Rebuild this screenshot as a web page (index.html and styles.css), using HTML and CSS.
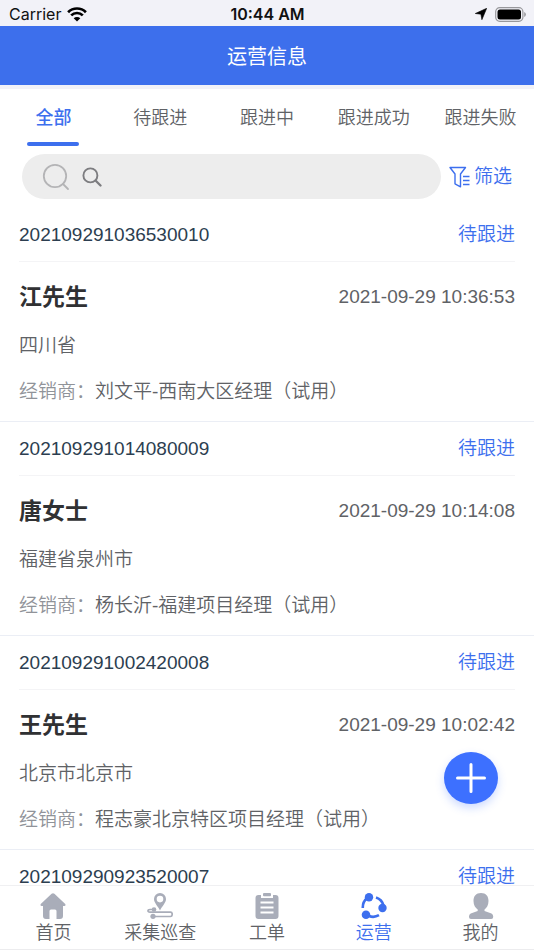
FILE: index.html
```html
<!DOCTYPE html>
<html lang="zh-CN">
<head>
<meta charset="utf-8">
<meta name="viewport" content="width=device-width, initial-scale=1">
<title>运营信息</title>
<link rel="stylesheet" href="styles.css">
</head>
<body>
<div class="status">
  <div class="carrier">Carrier
    <svg width="20" height="15" viewBox="0 0 20 15" fill="none" stroke="#000" stroke-width="2.7"><path d="M1.1 5.2a12.6 12.6 0 0 1 17.8 0M4.2 8.4a8.2 8.2 0 0 1 11.6 0"/><path d="M10 14.6 6.7 11.3a4.6 4.6 0 0 1 6.6 0z" fill="#000" stroke="none"/></svg>
  </div>
  <div class="clock">10:44 AM</div>
  <div class="power">
    <svg width="12" height="12" viewBox="0 0 12 12"><path d="M11.700.3 6.900 11.700 5.900 6.200.3 5.500z" stroke="#000" stroke-width=".6" stroke-linejoin="round"/></svg>
    <svg width="31" height="15" viewBox="0 0 31 15"><rect x=".7" y=".7" width="27.200" height="13.600" rx="4" fill="none" stroke="#98989c" stroke-width="1.200"/><rect x="2.500" y="2.500" width="23.500" height="10" rx="2.500"/><path d="M29.200 5v5q1.700-.7 1.700-2.500T29.200 5z" fill="#98989c"/></svg>
  </div>
</div>
<header class="title"><h1>运营信息</h1></header>
<nav class="tabs">
  <button class="tab active">全部</button>
  <button class="tab">待跟进</button>
  <button class="tab">跟进中</button>
  <button class="tab">跟进成功</button>
  <button class="tab">跟进失败</button>
</nav>
<div class="tools">
  <label class="search">
    <svg width="28" height="28" viewBox="0 0 28 28" fill="none" stroke="#b4b4b6" stroke-width="1.800" stroke-linecap="round"><circle cx="13" cy="13" r="11.200"/><path d="m21 21 5 5"/></svg>
    <svg width="20" height="20" viewBox="0 0 20 20" fill="none" stroke="#7d7d80" stroke-width="1.900" stroke-linecap="round"><circle cx="8.400" cy="8.400" r="7"/><path d="m13.500 13.500 5 5" stroke-width="2.300"/></svg>
    <input type="search" aria-label="搜索">
  </label>
  <button class="filter">
    <svg width="21" height="22" viewBox="0 0 21 22" fill="none" stroke="#3d6fee" stroke-width="1.400" stroke-linejoin="round"><path d="M1 1.500h15.500L11.500 8v12.800L6 17.800V8zM14 10.500h6.500M14 14.500h6.500M14 18.500h6.500"/></svg>
    筛选
  </button>
</div>
<main class="list">
  <article class="card">
    <div class="row head"><span>202109291036530010</span><span class="state">待跟进</span></div>
    <div class="row who"><h2>江先生</h2><time>2021-09-29 10:36:53</time></div>
    <p>四川省</p>
    <p><span class="label">经销商：</span>刘文平-西南大区经理（试用）</p>
  </article>
  <article class="card">
    <div class="row head"><span>202109291014080009</span><span class="state">待跟进</span></div>
    <div class="row who"><h2>唐女士</h2><time>2021-09-29 10:14:08</time></div>
    <p>福建省泉州市</p>
    <p><span class="label">经销商：</span>杨长沂-福建项目经理（试用）</p>
  </article>
  <article class="card">
    <div class="row head"><span>202109291002420008</span><span class="state">待跟进</span></div>
    <div class="row who"><h2>王先生</h2><time>2021-09-29 10:02:42</time></div>
    <p>北京市北京市</p>
    <p><span class="label">经销商：</span>程志豪北京特区项目经理（试用）</p>
  </article>
  <article class="card">
    <div class="row head"><span>202109290923520007</span><span class="state">待跟进</span></div>
  </article>
</main>
<button class="add" aria-label="新增">
  <svg width="30" height="30" viewBox="0 0 30 30" stroke="#fff" stroke-width="3" stroke-linecap="round"><path d="M15 1.500v27M1.500 15h27"/></svg>
</button>
<nav class="bar">
  <a href="#home"><svg width="26" height="26" viewBox="0 0 26 26" fill="#a9adb9"><path d="M11.600.8q1.400-1.200 2.800 0L25 10.800q1.300 1.600-.7 2.200H23v10q0 3-3 3h-3.500v-8q0-1.500-1.500-1.500h-4q-1.500 0-1.500 1.500v8H6q-3 0-3-3V13H1.700q-2-.6-.7-2.200z"/></svg>首页</a>
  <a href="#patrol"><svg width="26" height="26" viewBox="0 0 26 26" fill="#a9adb9"><path fill-rule="evenodd" d="M13 0a6 6 0 0 1 6 6c0 3.800-3.800 7-6 11.500C10.800 13 7 9.800 7 6a6 6 0 0 1 6-6zm0 2.800a3.300 3.300 0 1 0 0 6.600 3.300 3.300 0 0 0 0-6.600z"/><path d="M7 16.500H3q-2 0-2 1.300t2 1.400h20.500q1.700 0 1.700 2.100t-1.700 2.200H6" fill="none" stroke="#a9adb9" stroke-width="1.700"/><circle cx="7" cy="16.500" r="2.300"/><circle cx="6" cy="23.300" r="2.600"/></svg>采集巡查</a>
  <a href="#orders"><svg width="26" height="26" viewBox="0 0 26 26" fill="#a9adb9"><path d="M4.500 2H7v3h12V2h2.500q3 0 3 3v18q0 3-3 3h-17q-3 0-3-3V5q0-3 3-3z"/><rect x="9" width="8" height="3.200" rx="1"/><path d="M6.500 9.500h13M6.500 14.500h13M6.500 19.500h13" stroke="#fff" stroke-width="1.800"/></svg>工单</a>
  <a href="#ops" class="current"><svg width="26" height="26" viewBox="0 0 26 26" fill="none" stroke="#3d6fee" stroke-width="2.600"><path d="M6 5Q1.500 9 1.800 15M15 4.500q6 2 7.500 8M8 23q5 2 10-.8"/><g fill="#3d6fee" stroke="none"><circle cx="8" cy="4.200" r="4.200"/><circle cx="21.500" cy="15" r="4.200"/><circle cx="5" cy="21.700" r="4.300"/></g></svg>运营</a>
  <a href="#me"><svg width="26" height="26" viewBox="0 0 26 26" fill="#a9adb9"><path d="M13 0c5 0 7.500 3.200 7.500 8 0 4-1.700 7-4 8.500v1.500l7 2.500q1.700.8 1.700 3V24q0 2-2 2H3q-2 0-2-2v-.5q0-2.200 1.700-3l7-2.500v-1.500C7.300 15 5.500 12 5.500 8c0-4.800 2.500-8 7.500-8z"/></svg>我的</a>
</nav>
</body>
</html>
```
FILE: styles.css
```css
* { box-sizing: border-box; }
body {
  margin: 0;
  height: 100vh;
  display: flex;
  flex-direction: column;
  overflow: hidden;
  background: #fff;
  color: #606266;
  font: 350 19px/28px "Liberation Sans", "Noto Sans CJK SC", sans-serif;
}
h1, h2, p { margin: 0; }
button { border: 0; padding: 0; background: none; color: inherit; font: inherit; }
svg { display: block; flex: none; }
.status {
  flex: none;
  display: grid;
  grid-template-columns: 1fr auto 1fr;
  align-items: center;
  height: 26px;
  padding: 0 8px 0 9px;
  background: #f2f2f8;
  color: #111;
  font: 16px/28px Inter, sans-serif;
}
.carrier, .power { display: flex; align-items: center; gap: 6px; }
.power { justify-content: flex-end; gap: 8px; }
.clock { font-weight: 600; }
.title {
  flex: none;
  height: 63px;
  background: #3d6fec;
  border-bottom: 4px solid #f2f2f8;
  color: #fff;
  text-align: center;
}
.title h1 { font-size: 20px; font-weight: 400; line-height: 62px; }
.tabs { flex: none; display: grid; grid-template-columns: repeat(5, 1fr); height: 58px; }
.tab { position: relative; font-size: 18px; white-space: nowrap; }
.tab.active { color: #3d6fee; font-weight: 500; }
.tab.active::after {
  content: "";
  position: absolute;
  left: 50%;
  bottom: 1px;
  width: 52px;
  height: 4px;
  margin-left: -26px;
  border-radius: 2px;
  background: #3d6fee;
}
.tools { flex: none; display: flex; align-items: center; gap: 8px; padding: 7px 22px 9px; }
.search {
  flex: 1;
  display: flex;
  align-items: center;
  gap: 12px;
  height: 45px;
  padding: 0 20px;
  border-radius: 23px;
  background: #ededed;
}
.search input { flex: 1; min-width: 0; border: 0; outline: 0; background: none; font: inherit; }
.filter { display: flex; align-items: center; gap: 4px; color: #3d6fee; }
.list { flex: 1; min-height: 0; overflow: hidden; }
.card { padding: 0 19px 15px; border-bottom: 1px solid #ebeef5; }
.row { display: flex; align-items: center; justify-content: space-between; }
.head { height: 54px; border-bottom: 1px solid #f4f4f6; color: #2c3e50; }
.state { color: #3d6fee; }
.who { height: 70px; }
.who h2 { color: #303133; font-size: 23px; font-weight: 700; }
.card p { height: 28px; }
.card p + p { margin-top: 18px; }
.label { color: #909399; }
.add {
  position: fixed;
  right: 36px;
  bottom: 146px;
  display: grid;
  place-items: center;
  width: 54px;
  height: 52px;
  border-radius: 50%;
  background: #3d70ff;
  box-shadow: 0 4px 8px rgba(61, 112, 255, .25);
}
.bar {
  flex: none;
  display: grid;
  grid-template-columns: repeat(5, 1fr);
  height: 65px;
  border-top: 1px solid #f0f0f2;
  border-bottom: 1px solid #ececee;
  background: #fff;
}
.bar a {
  display: flex;
  flex-direction: column;
  align-items: center;
  padding-top: 7px;
  color: #606266;
  font-size: 18px;
  line-height: 28px;
  text-decoration: none;
}
.bar .current { color: #3d6fee; }
```
